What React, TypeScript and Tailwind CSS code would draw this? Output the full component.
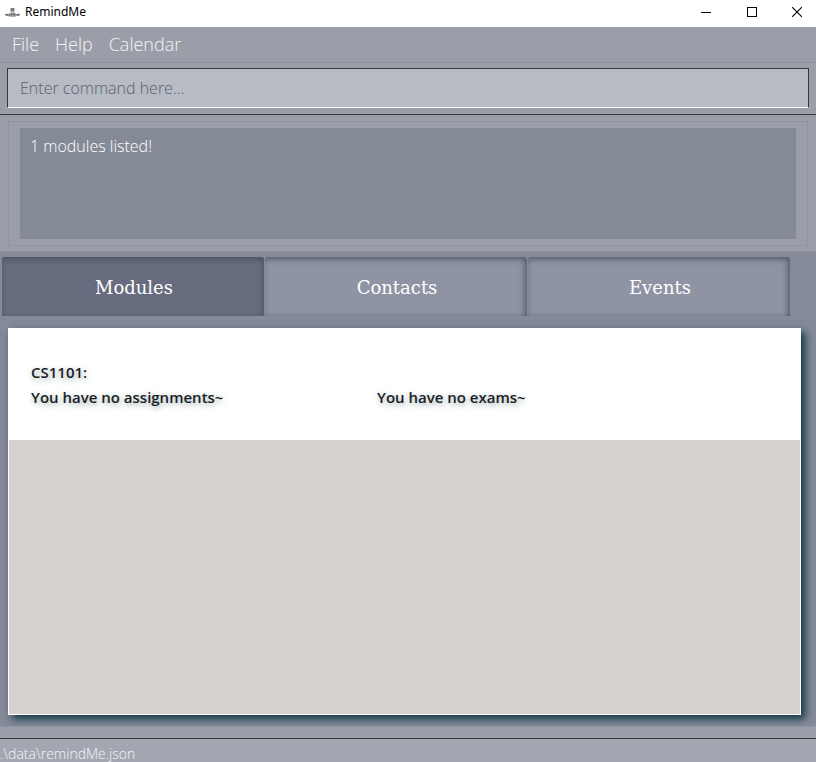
import React, { useState } from "react";

const menus = ["File", "Help", "Calendar"];
const tabs = ["Modules", "Contacts", "Events"];

function AppLogo() {
  return (
    <svg width="15" height="9" viewBox="0 0 15 9" aria-hidden="true">
      <path d="M5.5 0h4v3.6h-4z" fill="#7c7c7c" />
      <path d="M5.5 4h4v1h-4z" fill="#b5b5b5" />
      <path d="M0 5.6l3 .5 2.5-1h4l2.5 1 3-.5v2l-3 .4-2 .8H5l-2-.8-3-.4z" fill="#999" />
      <path d="M1 6.8h2M4 6.6h1M6 6.6h1M8 6.6h2M12 6.8h2" stroke="#555" strokeWidth="1" />
    </svg>
  );
}

function TitleBar() {
  return (
    <header className="flex h-[27px] items-start justify-between bg-white text-black">
      <div className="flex h-6 items-center gap-[5px] pl-[5px]">
        <AppLogo />
        <h1 className="font-['Noto_Sans','Open_Sans',sans-serif] text-[12px] leading-4">RemindMe</h1>
      </div>
      <div className="flex h-[23px]">
        <button aria-label="Minimize" className="flex w-[46px] items-center justify-center">
          <svg width="10" height="10" shapeRendering="crispEdges">
            <path d="M0 5.5h10" stroke="#000" />
          </svg>
        </button>
        <button aria-label="Maximize" className="flex w-[45px] items-center justify-center">
          <svg width="10" height="10" shapeRendering="crispEdges">
            <path d="M.5 .5h9v9h-9z" fill="none" stroke="#000" />
          </svg>
        </button>
        <button aria-label="Close" className="flex w-[42px] items-center justify-center pl-1">
          <svg width="10" height="10">
            <path d="M0 0L10 10M10 0L0 10" stroke="#000" strokeWidth="1.1" />
          </svg>
        </button>
      </div>
    </header>
  );
}

export default function App() {
  const [active, setActive] = useState("Modules");
  return (
    <div className="flex min-h-screen flex-col bg-[#9b9ea9] font-['Open_Sans','Noto_Sans',sans-serif]">
      <TitleBar />
      <nav className="flex h-9 items-center gap-4 border-b border-[#8f929f] pl-3 text-[18px] font-light text-[#f3f4f6]">
        {menus.map((m) => (
          <button key={m}>{m}</button>
        ))}
      </nav>

      <div className="border-b border-[#383838] px-[7px] pt-[5px] pb-[6px]">
        <input
          type="text"
          aria-label="Command"
          placeholder="Enter command here..."
          className="block h-10 w-full border border-[#383838] border-b-white bg-[#b7bbc4] px-3 text-[16px] font-light text-[#383838] outline-none placeholder:text-[#5c6068] placeholder:opacity-100"
        />
      </div>

      <section className="px-2 pt-[6px] pb-[5px]">
        <div className="border border-[#9093a0] px-[11px] py-[6px]">
          <output className="block h-[111px] bg-[#858b96] px-[10px] pt-[6px] text-[16px] leading-6 font-light text-white">
            1 modules listed!
          </output>
        </div>
      </section>

      <main className="flex flex-1 flex-col border-t border-[#8f929f] bg-[#858a99]">
        <div role="tablist" className="grid grid-cols-3 gap-px pt-[5px] pr-[26px] pl-[2px]">
          {tabs.map((t) => (
            <button
              key={t}
              role="tab"
              aria-selected={active === t}
              onClick={() => setActive(t)}
              className={
                "h-[59px] rounded-t-[3px] pt-[2px] pl-[2px] font-['DejaVu_Serif',serif] text-[18px] text-white " +
                (active === t
                  ? "bg-[#676c7e] shadow-[inset_-1px_2px_6px_#4c5064]"
                  : "bg-[#8f94a4] shadow-[inset_-2px_2px_6px_#515569]")
              }
            >
              {t}
            </button>
          ))}
        </div>

        <div className="flex flex-1 overflow-hidden pt-3 pr-[15px] pb-[11px] pl-2">
          <div className="flex flex-1 flex-col border border-white bg-[#d6d1ce] shadow-[4px_4px_8px_#0d3444]">
            <article className="grid h-[111px] grid-cols-[346px_1fr] content-start bg-white px-[22px] pt-[31px] text-[15px] leading-[25px] font-semibold text-[#1b2022] [text-shadow:1px_2px_6px_#8fa3a6]">
              <h2 className="col-span-2">CS1101:</h2>
              <p>You have no assignments~</p>
              <p>You have no exams~</p>
            </article>
          </div>
        </div>
      </main>

      <div className="h-3 border-t border-[#9093a0]" />
      <footer className="h-6 border-t border-[#383838] bg-[#a4a7b2] text-[14px] leading-[29px] font-light text-[#f3f4f6]">
        .\data\remindMe.json
      </footer>
    </div>
  );
}
